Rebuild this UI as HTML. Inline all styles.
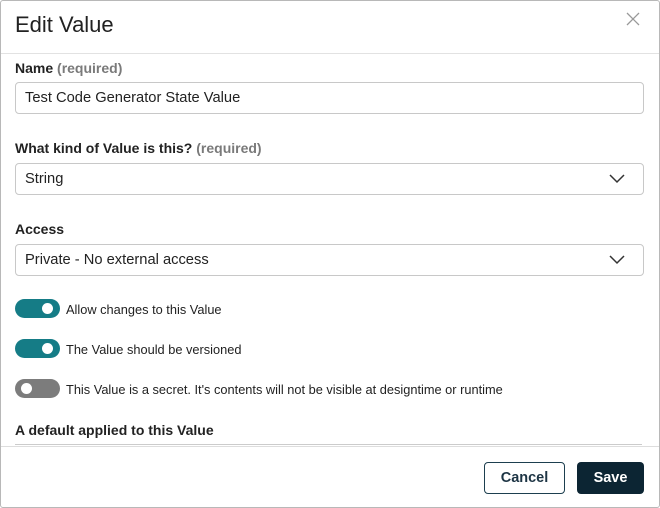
<html><head><style>
body{margin:0;width:660px;height:508px;overflow:hidden;background:#fff;font-family:"Liberation Sans",sans-serif;color:#1a1a1a}
.m{position:absolute;left:0;top:0;width:658px;height:506px;border:1px solid #b8b8b8;border-radius:3px}
.w{position:absolute;left:-1px;top:-1px;width:660px;height:508px}
.t{position:absolute;left:15px;top:12px;font-size:22px;color:#222}
.x{position:absolute;left:626px;top:12px}
.hl{position:absolute;left:1px;top:53px;width:658px;height:1px;background:#e2e2e2}
.lb{position:absolute;left:15px;font-size:14px;font-weight:bold;color:#222}
.lb span{color:#7a7a7a}
.in{position:absolute;left:15px;width:627px;height:30px;border:1px solid #c8c8c8;border-radius:4px;font-size:14.7px;line-height:30px;text-indent:9px;color:#222;box-sizing:content-box}
.ch{position:absolute;right:18px;top:10px}
.tg{position:absolute;left:15px;width:45px;height:19px;border-radius:10px;background:#157c86}
.tg i{position:absolute;top:4px;width:11px;height:11px;border-radius:50%;background:#fff}
.tl{position:absolute;left:66px;font-size:12.8px;color:#222}
.fl{position:absolute;left:1px;top:446px;width:658px;height:1px;background:#ddd}
.b{position:absolute;top:462px;height:32px;border-radius:4px;font-size:14.5px;font-weight:bold;text-align:center;line-height:30px;box-sizing:border-box}
</style></head><body><div class="m"><div class="w">
<div class="t">Edit Value</div>
<svg class="x" width="14" height="14"><path d="M1 1L13 13M13 1L1 13" stroke="#999" stroke-width="1.3"/></svg>
<div class="hl"></div>
<div class="lb" style="top:60px">Name <span>(required)</span></div>
<div class="in" style="top:82px">Test Code Generator State Value</div>
<div class="lb" style="top:140px">What kind of Value is this? <span>(required)</span></div>
<div class="in" style="top:163px">String<svg class="ch" width="16" height="10"><path d="M1 1L8 8L15 1" stroke="#333" stroke-width="1.5" fill="none"/></svg></div>
<div class="lb" style="top:221px">Access</div>
<div class="in" style="top:244px">Private - No external access<svg class="ch" width="16" height="10"><path d="M1 1L8 8L15 1" stroke="#333" stroke-width="1.5" fill="none"/></svg></div>
<div class="tg" style="top:299px"><i style="left:27px"></i></div><div class="tl" style="top:302px">Allow changes to this Value</div>
<div class="tg" style="top:339px"><i style="left:27px"></i></div><div class="tl" style="top:342px">The Value should be versioned</div>
<div class="tg" style="top:379px;background:#7c7c7c"><i style="left:6px"></i></div><div class="tl" style="top:382px">This Value is a secret. It's contents will not be visible at designtime or runtime</div>
<div class="lb" style="top:422px">A default applied to this Value</div>
<div style="position:absolute;left:15px;top:444px;width:627px;height:1px;background:#ccc"></div>
<div class="fl"></div>
<div class="b" style="left:484px;width:81px;border:1px solid #1d3f4f;color:#1d3444">Cancel</div>
<div class="b" style="left:577px;width:67px;background:#0c2533;color:#fff;line-height:32px">Save</div>
</div></div></body></html>
